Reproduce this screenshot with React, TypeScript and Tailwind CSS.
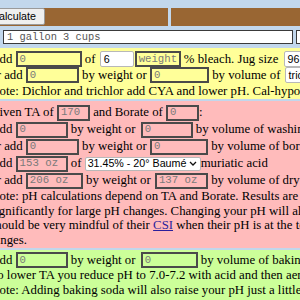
import React from "react";

const SERIF = "font-['Liberation_Serif','Times_New_Roman',serif] text-[12.8px] leading-[14.7px] text-black";

function DBox({ className, children }: { className: string; children?: React.ReactNode }) {
  return (
    <span
      className={
        "flex items-center shrink-0 h-[16px] border-2 border-[#4a4a4a] pl-[2px] font-['Liberation_Mono','Courier_New',monospace] text-[10.7px] text-[#7a7a7a] overflow-hidden whitespace-pre " +
        className
      }
    >
      {children}
    </span>
  );
}

function WBox({ className, children }: { className: string; children?: React.ReactNode }) {
  return (
    <span
      className={
        "flex items-center shrink-0 h-[16px] border border-[#b8b8b8] rounded-[2px] bg-white pl-[3px] font-['Liberation_Sans',Arial,sans-serif] text-[10.7px] text-black overflow-hidden whitespace-pre " +
        className
      }
    >
      {children}
    </span>
  );
}

function Row({ children, h = "h-[16px]" }: { children: React.ReactNode; h?: string }) {
  return <div className={"flex items-center whitespace-pre " + h}>{children}</div>;
}

export default function App() {
  return (
    <div className="w-[300px] h-[300px] overflow-hidden bg-[#c2d7ec]">
      <div className={"ml-[-11.7px] w-[820px] pt-[8px] " + SERIF}>
        {/* Brown bar */}
        <div className="flex h-[18px] gap-[3px]">
          <div className="w-[180px] bg-[#996633] flex">
            <button className="w-[57px] h-[17px] bg-[#efefef] border border-[#9a9a9a] rounded-[2px] pl-[2px] text-left font-['Liberation_Sans',Arial,sans-serif] text-[10.7px] text-black leading-none">
              Calculate
            </button>
          </div>
          <div className="flex-1 bg-[#996633]" />
        </div>

        {/* Input row */}
        <div className="mt-[2px] h-[18px] flex items-center pl-[14.7px] gap-[3px]">
          <div className="w-[290px] h-[14px] bg-white border-[1.5px] border-[#3a3a3a] flex items-center pl-[3px] font-['Liberation_Mono','Courier_New',monospace] text-[10.4px] text-[#555] whitespace-pre">
            1 gallon 3 cups
          </div>
          <div className="w-[120px] h-[14px] bg-white border-[1.5px] border-[#3a3a3a]" />
        </div>

        {/* Yellow */}
        <div className="mt-[2px] bg-[#ffff99] pt-[3px] pl-[2px] h-[51px]">
          <Row>
            Add <DBox className="w-[66px] bg-[#ffff99]">0</DBox> of{" "}
            <WBox className="w-[34px] ml-[1px]">6</WBox> <DBox className="w-[46px] ml-[1px] bg-[#ffff99]">weight</DBox> % bleach. Jug size{" "}
            <WBox className="w-[60px] ml-[2px]">96</WBox>
          </Row>
          <Row>
            or add <DBox className="w-[53px] bg-[#ffff99]">0</DBox> by weight or{" "}
            <DBox className="w-[59px] bg-[#ffff99]">0</DBox> by volume of{" "}
            <WBox className="w-[80px] ml-[1px]">trichlor</WBox>
          </Row>
          <Row>Note: Dichlor and trichlor add CYA and lower pH. Cal-hypo adds calcium and raises pH.</Row>
        </div>

        {/* Pink */}
        <div className="mt-[2px] bg-[#ffbbbb] pt-[3px] pl-[2px] h-[147px]">
          <Row h="h-[17px]">
            Given TA of <DBox className="w-[33px] bg-[#ffbbbb]">170</DBox> and Borate of{" "}
            <DBox className="w-[33px] bg-[#ffbbbb]">0</DBox>:
          </Row>
          <Row h="h-[17px]">
            Add <DBox className="w-[52px] bg-[#ffbbbb]">0</DBox> by weight or{" "}
            <DBox className="w-[52px] ml-[2px] bg-[#ffbbbb]">0</DBox> by volume of washing soda
          </Row>
          <Row h="h-[17px]">
            or add <DBox className="w-[53px] bg-[#ffbbbb]">0</DBox> by weight or{" "}
            <DBox className="w-[58px] bg-[#ffbbbb]">0</DBox> by volume of borax
          </Row>
          <Row h="h-[17px]">
            Add <DBox className="w-[52px] bg-[#ffbbbb]">153 oz</DBox> of{" "}
            <span className="flex items-center justify-between shrink-0 w-[116px] h-[14px] border border-[#b8b8b8] rounded-[2px] bg-white pl-[2px] pr-[3px] font-['Liberation_Sans',Arial,sans-serif] text-[10.7px] text-black whitespace-nowrap overflow-hidden">
              <span className="whitespace-nowrap">31.45% - 20° Baumé</span>
              <svg width="8" height="5" viewBox="0 0 8 5" className="shrink-0">
                <path d="M1 1l3 3 3-3" fill="none" stroke="#111" strokeWidth="1.3" />
              </svg>
            </span>{" "}
            muriatic acid
          </Row>
          <Row h="h-[17px]">
            or add <DBox className="w-[57px] bg-[#ffbbbb]">206 oz</DBox> by weight or{" "}
            <DBox className="w-[53px] ml-[1px] bg-[#ffbbbb]">137 oz</DBox> by volume of dry acid
          </Row>
          <div className="whitespace-pre">
            <div>Note: pH calculations depend on TA and Borate. Results are approximate and can vary</div>
            <div>significantly for large pH changes. Changing your pH will also change your CSI. People</div>
            <div>
              should be very mindful of their{" "}
              <a href="#" className="text-[#2b1f9c] underline">
                CSI
              </a>{" "}
              when their pH is at the top or bottom of the recommended
            </div>
            <div>ranges.</div>
          </div>
        </div>

        {/* Green */}
        <div className="mt-[2px] bg-[#ccff99] pt-[2px] pl-[2px] h-[60px]">
          <Row>
            Add <DBox className="w-[52px] bg-[#ccff99]">0</DBox> by weight or{" "}
            <DBox className="w-[57px] ml-[2px] bg-[#ccff99]">0</DBox> by volume of baking soda
          </Row>
          <div className="whitespace-pre">
            <div>To lower TA you reduce pH to 7.0-7.2 with acid and then aerate to raise pH.</div>
            <div>Note: Adding baking soda will also raise your pH just a little.</div>
          </div>
        </div>
      </div>
    </div>
  );
}
